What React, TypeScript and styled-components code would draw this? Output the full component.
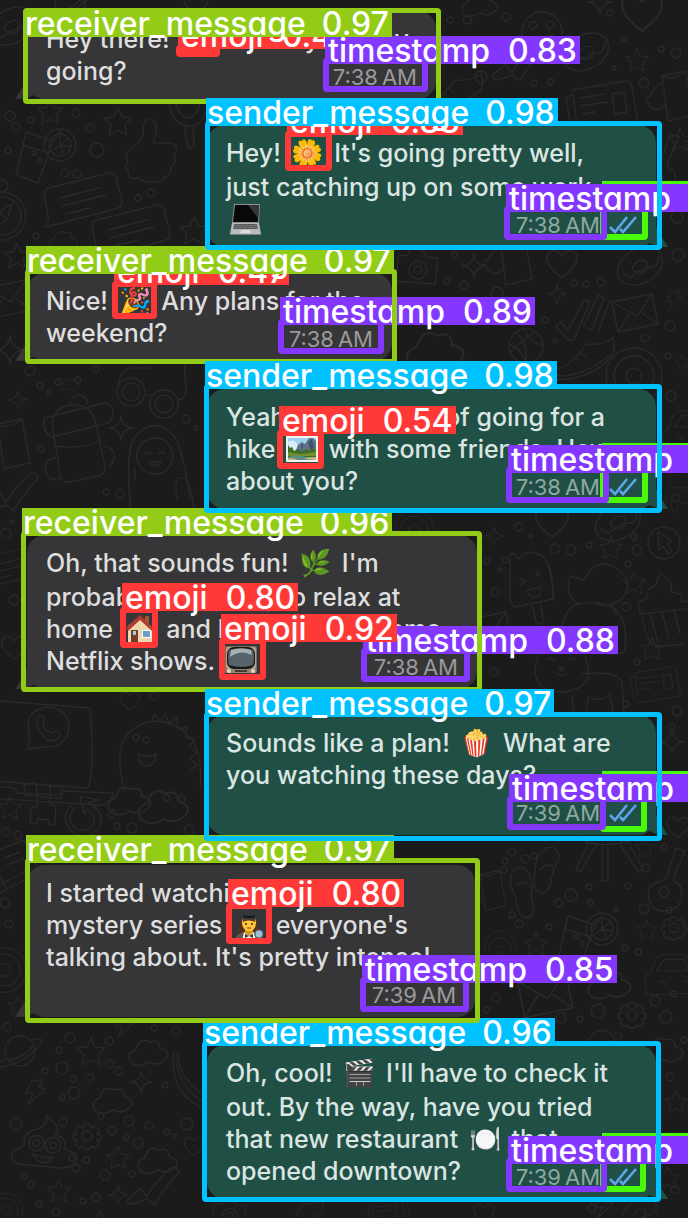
import React from "react";
import styled, { createGlobalStyle, css } from "styled-components";

type Side = "receiver" | "sender";
type Kind = "receiver_message" | "sender_message" | "emoji" | "timestamp" | "ticks";

const palette: Record<Kind, string> = {
  receiver_message: "#92cc17",
  sender_message: "#00c2ff",
  emoji: "#ff3838",
  timestamp: "#8438ff",
  ticks: "#48f90a",
};

const GlobalStyle = createGlobalStyle`
  * { box-sizing: border-box; }
  body { margin: 0; background: #1b1b1c; }
`;

const Page = styled.main`
  position: relative;
  overflow: hidden;
  padding: 11px 32px 19px 27px;
  background: #1b1b1c;
  font-family: Inter, "Liberation Sans", sans-serif;
`;

const Wallpaper = styled.svg`
  position: absolute;
  inset: 0;
  width: 100%;
  height: 100%;
  fill: none;
  stroke: #29292a;
  stroke-width: 1.4;
  stroke-linecap: round;
  stroke-linejoin: round;
`;

const Thread = styled.ol`
  display: flex;
  flex-direction: column;
  list-style: none;
  margin: 0;
  padding: 0;
`;

const Bubble = styled.li<{ $side: Side; $width: number; $space: number }>`
  position: relative;
  display: grid;
  width: ${(p) => p.$width}px;
  margin-bottom: ${(p) => p.$space}px;
  padding: 12px 19px;
  border-radius: 18px;
  align-self: ${(p) => (p.$side === "sender" ? "flex-end" : "flex-start")};
  background: ${(p) => (p.$side === "sender" ? "#205045" : "#363638")};
  color: ${(p) => (p.$side === "sender" ? "#dbe5e2" : "#dededf")};

  &::before {
    content: "";
    position: absolute;
    bottom: 0;
    width: 26px;
    height: 20px;
    background: inherit;
    ${(p) =>
      p.$side === "sender"
        ? css`
            right: -12px;
            clip-path: path("M0 0 H14 Q18 8 26 20 Q12 20 4 14 Z");
          `
        : css`
            left: -12px;
            clip-path: path("M26 0 H12 Q8 8 0 20 Q14 20 22 14 Z");
          `}
  }
`;

const Text = styled.p<{ $ownStampRow?: boolean }>`
  grid-area: 1 / 1;
  position: relative;
  margin: 0;
  padding-bottom: ${(p) => (p.$ownStampRow ? 32 : 0)}px;
  font-size: 25px;
  font-weight: 480;
  white-space: pre;
`;

const Line = styled.span<{ $tall?: boolean }>`
  display: flex;
  align-items: center;
  height: ${(p) => (p.$tall ? 34 : 32)}px;
  padding-bottom: ${(p) => (p.$tall ? 2 : 0)}px;
  line-height: 32px;
`;

const Emoji = styled.span`
  display: inline-flex;
  justify-content: center;
  width: 40px;
  font-size: 26px;
`;

const Picture = styled.svg`
  width: 32px;
  height: 32px;
  margin: 0 4px;
`;

const Meta = styled.div<{ $side: Side }>`
  grid-area: 1 / 1;
  align-self: end;
  justify-self: end;
  position: relative;
  display: flex;
  align-items: center;
  gap: 9px;
  color: ${(p) => (p.$side === "sender" ? "#8fa8a1" : "#9a9a9c")};
  font-size: 22px;
  line-height: 20px;
`;

const Ticks = styled.svg`
  width: 28px;
  height: 18px;
  fill: none;
  stroke: #5ba4ee;
  stroke-width: 2.6;
`;

const Box = styled.div<{ $kind: Kind; $x: number; $y: number; $w: number; $h: number; $level: number }>`
  position: absolute;
  left: ${(p) => p.$x}px;
  top: ${(p) => p.$y}px;
  width: ${(p) => p.$w}px;
  height: ${(p) => p.$h}px;
  z-index: ${(p) => p.$level};
  border: ${(p) => (p.$kind.endsWith("message") ? 5 : 6)}px solid ${(p) => palette[p.$kind]};
  border-radius: 4px;
  pointer-events: none;
`;

const Tag = styled.span<{ $kind: Kind; $inside?: boolean }>`
  position: absolute;
  left: -4px;
  ${(p) => (p.$inside ? "top: -4px" : `bottom: calc(100% + ${p.$kind === "emoji" ? 2 : 0}px)`)};
  display: flex;
  gap: ${(p) => (p.$kind.endsWith("message") ? 16 : 18)}px;
  height: 28px;
  min-width: ${(p) => (p.$kind === "ticks" ? 160 : 0)}px;
  padding: 0 3px 0 ${(p) => (p.$kind.endsWith("message") ? 1 : 3)}px;
  background: ${(p) => palette[p.$kind]};
  color: #fff;
  font-size: 32px;
  font-weight: 500;
  line-height: 30px;
  font-feature-settings: "cv11";
  white-space: nowrap;
`;

const OffscreenScore = styled.span`
  width: 72px;
`;

interface Detection {
  kind: Kind;
  score?: string;
  level: number;
  box: [number, number, number, number];
  inside?: boolean;
}

interface Message {
  side: Side;
  time: string;
  width: number;
  space: number;
  ownStampRow?: boolean;
  lines: { tall?: boolean; content: React.ReactNode }[];
  detections: Detection[];
}

const Laptop = () => (
  <Picture viewBox="0 0 32 32" role="img" aria-label="laptop">
    <path d="M4 1h26l-1 19H2z" fill="#8d8f90" />
    <path d="M5 2h24l-1 17H3z" fill="#080808" />
    <path d="M18 2h11l-1 13z" fill="#34373a" />
    <path d="M2 20h27l2 11H0z" fill="#b9babb" />
    <path d="M4 21h23l1 5H3z" fill="#56585a" />
    <path d="M4 22.500h23M3 24.500h25" stroke="#a6a8a9" strokeWidth=".6" strokeDasharray="1.500 1" />
    <path d="M11 27h9l1 3H10z" fill="#dcdddd" />
    <path d="M0 31h31v1H0z" fill="#7d7f80" />
  </Picture>
);

const Landscape = () => (
  <Picture viewBox="0 0 32 32" role="img" aria-label="national park">
    <path d="M0 3h32v26H0z" fill="#f1f3ee" />
    <path d="M2 5h28v22H2z" fill="#9fd0ef" />
    <path d="M2 9q6-4 9 2v9H2z" fill="#dcecf4" />
    <path d="M9 20l3-8 4-3 3 2 4-6h4l3 3v13z" fill="#5d7286" />
    <path d="M22 9l4-3 2 9-3 3zM15 11l2 1-1 6z" fill="#3d5268" />
    <path d="M2 12l2 3 2-1 2 4 4-2 4 3 4-3 3 2 3-3 4 2v7H2z" fill="#3f6d25" />
    <path d="M2 19l5 1 9 1 14-2v4H2z" fill="#74902c" />
    <path d="M2 24q8-3 14-1t14 1v3H2z" fill="#5a8d88" />
    <path d="M2 25q7 0 10 2H2zM30 24q-9 0-12 2l12 1z" fill="#c9b37d" />
  </Picture>
);

const Television = () => (
  <Picture viewBox="0 0 32 32" role="img" aria-label="television">
    <rect x="0" y="1" width="32" height="27" rx="2" fill="#806c58" />
    <rect x="1" y="2" width="30" height="22" rx="2" fill="#b5a28c" />
    <rect x="2" y="2" width="28" height="22" rx="7" fill="#15191a" />
    <path d="M4 5q12-4 24 0 2 8 0 15-12 4-24 0Q2 12 4 5" fill="#56646a" />
    <path d="M6 5q10-3 20 0l1 5Q16 4 5 12z" fill="#a3b0b4" />
    <path d="M1 24h30v4H1z" fill="#998672" />
    <path d="M10 26h12" stroke="#423a33" strokeWidth="2" />
    <circle cx="4" cy="26" r="2" fill="#e0d9cd" />
    <circle cx="28" cy="26" r="2" fill="#e0d9cd" />
    <path d="M4 28h4v3H5zM24 28h4l-1 3h-3z" fill="#5b4a3b" />
  </Picture>
);

const House = () => (
  <Picture viewBox="0 0 32 32" role="img" aria-label="house">
    <path d="M21 3h4v8h-4z" fill="#a2543d" />
    <path d="M4 13L16 3l12 11v16H4z" fill="#efd7ae" />
    <path d="M2 15L16 2l14 14-2 2L16 7 4 18z" fill="#b33a2c" />
    <path d="M7 17h7v13H7z" fill="#713c29" />
    <path d="M9 18h3v4H9z" fill="#a9c8d8" />
    <path d="M18 17h9v8h-9z" fill="#fff" />
    <path d="M19 18h7v6h-7z" fill="#699fc8" />
    <path d="M3 29h26v2H3z" fill="#8c9470" />
  </Picture>
);

const Detective = () => (
  <Picture viewBox="0 0 32 32" role="img" aria-label="detective">
    <path d="M9 9q-3 8-4 13l4 2h14l4-3q-3-5-4-12z" fill="#563220" />
    <path d="M2 32q1-8 9-9h10q8 1 9 9z" fill="#6b5646" />
    <path d="M11 23l5 3 5-3 2 9H9z" fill="#f1f1ef" />
    <path d="M12 19h8v5l-4 3-4-3z" fill="#d99a1c" />
    <path d="M9 9h14q1 13-7 13T9 9z" fill="#ffc83a" />
    <path d="M9 9h14l-1 4q-7-3-12 0z" fill="#6b3d22" />
    <circle cx="13" cy="15" r="1" fill="#3b2412" />
    <circle cx="19" cy="15" r="1" fill="#3b2412" />
    <path d="M14 19h4" stroke="#b4442e" strokeWidth="1.200" />
    <path d="M4 9q4-2 6-3 0-5 6-5t6 5q2 1 6 3-12 3-24 0z" fill="#35393b" />
    <path d="M10 6q6 2 12 0v2q-6 2-12 0z" fill="#161819" />
    <path d="M12 25l4 2 4-2v4l-4-2-4 2z" fill="#34383b" />
    <circle cx="26" cy="25" r="4" fill="#9dbfd5" stroke="#5a5f63" strokeWidth="1.200" />
    <path d="M24 29l-2 3" stroke="#4a4d50" strokeWidth="2" />
  </Picture>
);

const E = ({ children }: { children: string }) => <Emoji>{children}</Emoji>;

const messages: Message[] = [
  {
    side: "receiver",
    time: "7:38\u2009AM",
    width: 409,
    space: 26,
    lines: [
      { content: <>Hey there! <E>👋</E> How's your day</> },
      { content: "going?" },
    ],
    detections: [
      { kind: "receiver_message", score: "0.97", level: 97, box: [-4, -3, 418, 96], inside: true },
      { kind: "emoji", score: "0.47", level: 47, box: [149, 34, 44, 11] },
      { kind: "timestamp", score: "0.83", level: 83, box: [296, 47, 105, 34] },
    ],
  },
  {
    side: "sender",
    time: "7:38\u2009AM",
    width: 449,
    space: 26,
    lines: [
      { tall: true, content: <>Hey! <E>🌼</E> It's going pretty well,</> },
      { content: "just catching up on some work" },
      { content: <Laptop /> },
    ],
    detections: [
      { kind: "sender_message", score: "0.98", level: 98, box: [-2, -4, 457, 129] },
      { kind: "emoji", score: "0.88", level: 88, box: [78, 6, 47, 40] },
      { kind: "timestamp", level: 87, box: [297, 81, 103, 34] },
      { kind: "ticks", level: 60, box: [393, 78, 48, 37] },
    ],
  },
  {
    side: "receiver",
    time: "7:38\u2009AM",
    width: 365,
    space: 28,
    lines: [
      { content: <>Nice! <E>🎉</E> Any plans for the</> },
      { content: "weekend?" },
    ],
    detections: [
      { kind: "receiver_message", score: "0.97", level: 97, box: [-2, -4, 372, 95] },
      { kind: "emoji", score: "0.47", level: 47, box: [85, 8, 45, 38] },
      { kind: "timestamp", score: "0.89", level: 89, box: [251, 46, 106, 35] },
    ],
  },
  {
    side: "sender",
    time: "7:38\u2009AM",
    width: 449,
    space: 26,
    lines: [
      { content: "Yeah, I'm thinking of going for a" },
      { content: <>hike <Landscape /> with some friends. How</> },
      { content: "about you?" },
    ],
    detections: [
      { kind: "sender_message", score: "0.98", level: 98, box: [-3, -5, 458, 129] },
      { kind: "emoji", score: "0.54", level: 54, box: [70, 41, 47, 39] },
      { kind: "timestamp", level: 87, box: [299, 78, 103, 36] },
      { kind: "ticks", level: 60, box: [393, 76, 48, 38] },
    ],
  },
  {
    side: "receiver",
    time: "7:38\u2009AM",
    width: 450,
    space: 26,
    lines: [
      { tall: true, content: <>Oh, that sounds fun! <E>🌿</E> I'm</> },
      { content: "probably just going to relax at" },
      { content: <>home <House /> and binge-watch some</> },
      { content: <>Netflix shows. <Television /></> },
    ],
    detections: [
      { kind: "receiver_message", score: "0.96", level: 96, box: [-6, -4, 461, 161] },
      { kind: "emoji", score: "0.80", level: 80, box: [93, 72, 38, 41] },
      { kind: "emoji", score: "0.92", level: 92, box: [192, 103, 47, 42] },
      { kind: "timestamp", score: "0.88", level: 88, box: [334, 113, 109, 34] },
    ],
  },
  {
    side: "sender",
    time: "7:39\u2009AM",
    width: 449,
    space: 30,
    ownStampRow: true,
    lines: [
      { content: <>Sounds like a plan! <E>🍿</E> What are</> },
      { content: "you watching these days?" },
    ],
    detections: [
      { kind: "sender_message", score: "0.97", level: 98, box: [-3, -3, 458, 129] },
      { kind: "timestamp", level: 87, box: [300, 81, 99, 34] },
      { kind: "ticks", level: 60, box: [393, 78, 47, 39] },
    ],
  },
  {
    side: "receiver",
    time: "7:39\u2009AM",
    width: 448,
    space: 28,
    ownStampRow: true,
    lines: [
      { content: "I started watching a new" },
      { content: <>mystery series <Detective /> everyone's</> },
      { content: "talking about. It's pretty intense!" },
    ],
    detections: [
      { kind: "receiver_message", score: "0.97", level: 97, box: [-2, -7, 455, 165] },
      { kind: "emoji", score: "0.80", level: 80, box: [199, 38, 46, 41] },
      { kind: "timestamp", score: "0.85", level: 85, box: [333, 112, 109, 35] },
    ],
  },
  {
    side: "sender",
    time: "7:39\u2009AM",
    width: 449,
    space: 0,
    lines: [
      { tall: true, content: <>Oh, cool! <E>🎬</E> I'll have to check it</> },
      { content: "out. By the way, have you tried" },
      { content: <>that new restaurant <E>🍽️</E> that</> },
      { content: "opened downtown?" },
    ],
    detections: [
      { kind: "sender_message", score: "0.96", level: 96, box: [-5, -4, 459, 161] },
      { kind: "timestamp", level: 87, box: [299, 113, 101, 34] },
      { kind: "ticks", level: 60, box: [393, 110, 46, 37] },
    ],
  },
];

/* Line drawings of the chat wallpaper, each drawn round its own origin. */
const doodles: Record<string, React.ReactNode> = {
  star: <path d="M0-14l4 9 10 1-7 7 2 10-9-5-9 5 2-10-7-7 10-1z" />,
  sparkle: <path d="M0-12Q1-1 12 0 1 1 0 12-1 1-12 0-1-1 0-12z" />,
  cloud: <path d="M-16 10q-6-8 4-12 3-12 13-7 9-3 9 6 10 2 6 9-8 8-16 3-8 6-16 1z" />,
  bolt: <path d="M-4-14l13-2-5 9 8 1-20 18 6-13-8 0z" />,
  heart: <path d="M0 13Q-15 2-12-6-6-14 0-5 6-14 12-6 15 2 0 13z" />,
  gear: <><circle r="5" /><path d="M-3-12h6l1 4 4-2 4 4-2 4 4 1v4l-4 1 2 4-4 4-4-2-1 3h-6l-1-3-4 2-4-4 2-4-4-1v-4l4-1-2-4 4-4 4 2z" /></>,
  planet: <><circle r="15" /><path d="M-14 7q-14 10-6 9Q2 14 20-6q6-9-7-5M-10 9Q5 6 14-6" /></>,
  drink: <><path d="M-12-16l27 9-15 42-22-8zM-15-3l26 8M15-7l8-10" /><circle cx="22" cy="-3" r="16" /><circle cx="22" cy="-3" r="11" /><path d="M22-3l8-7M22-3l10 2M22-3l4 9M22-3v-10M22-3l-8 6" /><circle cx="-4" cy="5" r="2" /><circle cx="2" cy="12" r="2" /></>,
  thumb: <path d="M-18 0q7-4 13-15 0-20 9-16 8 5 1 24h18q9 4 3 12 4 7-3 11 1 8-6 11-4 7-16 5-8-1-11-4-12 2-9-6-6-6-1-10-4-8 2-12z" />,
  note: <><path d="M-34-8q0-5 5-6l60-15q6-1 7 4l6 24q1 6-4 7L-20 22l-13 3 4-7zM-18-4l42-11M-16 4L28-7M-12 12l24-6" /></>,
  compass: <><circle r="24" /><circle r="19" /><circle cy="-30" r="6" /><path d="M-8 12L-3-4 10-12 5 4zM-3-4l8 8" /></>,
  glasses: <><circle cx="-17" cy="0" r="14" /><circle cx="-17" r="9" /><circle cx="16" cy="12" r="14" /><circle cx="16" cy="12" r="9" /><path d="M-3 4q5-3 7 2M-30-6q2-16 14-18h18M30 8q8-2 8-8l-2-33" /></>,
  backpack: <><path d="M-20 28l-8-50q2-18 20-19t23 15l10 46q1 8-6 10l-30 6q-8 0-9-8zM-26 0q28 4 47-6M-36-28l60-15q8 0 9 8t-5 12l-56 14q-10-5-8-19zM-25 12q-12 2-9 14l4 8 10-2M24 0q12 2 10 14l-4 6" /><path d="M-10-42q2-10 12-8 6 2 5 8" /></>,
  bean: <><path d="M-24 44q-6-60 3-74Q0-56 22-28q10 30 13 60M-20 12v-12M22 30q-4-20 5-20 8 0 12 30" /><circle r="18" cy="-12" /><path d="M-10-14q4-4 7 0M3-14q4-4 7 0M-6-6q6 8 12 0z" /></>,
  camera: <><path d="M-20-12l10-1 3-6 12 1 3 7 12 1-3 26-39-3z" /><circle cx="0" cy="2" r="9" /><circle cx="0" cy="2" r="4" /></>,
  letter: <><path d="M-22-12l40-8 6 30-40 8zM-22-12l25 14 15-22M-16 18l11-19M24 10L8-1" /></>,
  ball: <><circle r="17" /><path d="M-17-2q14 6 17 19M-10-14Q2-2 0 17M-1-17q2 12 18 16M9-14Q-6-4-16 6" /></>,
  eye: <><circle r="28" /><circle r="20" /><circle r="8" /></>,
  shoe: <path d="M-30 14Q-8 6 4-14q16 2 27-6 4 10-2 18-16 22-52 24-10-2-7-8zM-26 18q30 0 52-20M-6 0l5 3M-1-5l5 3" />,
  ticks: <path d="M-28 8l5-4 7 8L0-18l6 2-16 38-6 0zM2 10l6 2L20-20l-6-3L0 8M14 14L26-18" />,
  pen: <path d="M-26 8q-4 6 4 6l14-5 8 6Q2 8 24-18q-2-7-9-4Q-4-3-8 7l-6-9z" />,
  face: <><circle r="20" /><path d="M-12-5q-2-5 2-5 4-2 5 4l-5 4zM4-8q2-5 5-2 5 0 3 5l-6 2zM-9 5q10 6 20-3-2 14-11 13-7-2-9-10z" /></>,
  donut: <><ellipse rx="24" ry="17" transform="rotate(-30)" /><ellipse rx="8" ry="5" transform="rotate(-30)" /><path d="M-17 7q8 8 13-1 7 5 12-5 11 2 11-11" /></>,
  news: <><path d="M-28-16l54-9q5 0 6 6l6 36-60 10q-8-2-8-10l-4-26 7-2 4 30M-20-8l26-4M-19 0l26-4M-17 8l12-2M12-12l12-2 3 20-12 2z" /></>,
  jug: <path d="M-12-22l24-5 8 44-26 6zM-12-15q-10 6-12 14-6-3-2 6 6 12 18 2M-12-22q10 6 24-5" />,
  popsicle: <><path d="M-22-28q6-2 8 5 8-10 20-5 16 6 15 45l-38 8q-6-2-5-10zM0 22l4 18q5 4 8-1L8 20M6-28q12 0 16 46" /><path d="M-12-3l6 2-5 4M2-6l6-1-4-4M-5 8l13-3q3 10-5 10-6 1-8-7z" /></>,
  cupcake: <><path d="M-24 4q-6-8 8-12-4-8 8-13L-4-33Q12-22 6-14q14 0 12 10 16-3 12 6L-24 8zM-22 8q4 30 14 33L18 38M-14 8l8 28M-2 6l7 26M10 4l6 24" /></>,
  unicorn: <path d="M-28 38q0-30 16-34-14-10-8-28l14 4q12-24 32-12 18 12 8 28-12 14-30 7M-12 4q18-4 36 4 16 14 10 44l-12 2-2-22q-12 6-22 0l-4 20-10-2-2-22" />,
  kitty: <><path d="M-24-8L-20-28l12 9q10-3 18 0L22-26l2 22q8 20-8 28-18 8-34 0-14-10-6-32zM20 10q34-4 40 8l2 34-10 1-4-22q-12 8-22 2l-2 20-12 2-2-24" /><path d="M-14-4q3-4 7 0M6-4q3-4 7 0M-3 4h5l-3 3zM-6 9q5 5 10 0" /></>,
  pointer: <><circle r="16" /><path d="M-6-11l14 9-5 2 5 8-4 3-5-8-4 4z" /></>,
  phone: <><path d="M-20 21l2-12Q-26-18 0-21q21 2 21 21-2 20-24 19z" /><path d="M-10-11q6-3 6 3l-1 5q3 7 9 8 6-5 8 2-3 9-14 4Q-14-1-10-11z" /></>,
  dino: <><path d="M-34 46Q-44 2-30-10q20-22 52-6 24 16 20 60M-20 10q12 5 18 0 0 12-11 12-7-2-7-12M-6-22l2-8 6 7 5-8 4 10 8-5 1 11 9-2-2 10 9 2-5 8 8 5-7 7 7 6-7 6" /><circle cx="-22" cy="-6" r="3" /><circle cx="-12" cy="-4" r="3" /></>,
  laptop: <><path d="M-70-40L60-30q5 60-2 80L-76 40M-70-40v76M-76 44l60 6 4 5 40 2 5-4 50 2q-4 14-16 12L-76 58z" /></>,
  creeper: <path d="M-20-22l12-1 1 12-12 1zM6-20h12v12H6zM-7-10L6-8v6l6 2-1 18-6 1v-5l-11-1-1 5-7-1 1-15 6-1z" />,
  redo: <path d="M4-15q17 8 12 23-10 16-26 7-15-12-4-27l4 3q-8 10 1 19 9 6 17-2 6-10-5-17l-3 5-4-18 18 4z" />,
  poop: <><path d="M-22 20q-14-8 6-17-2-10 8-14 14-2 12-13 14 10 8 17 12 4 8 13 16 5 10 14-8 5-20 3z" /><circle cx="-5" cy="1" r="7" /><circle cx="10" cy="3" r="7" /><circle cx="-5" cy="1" r="3" /><circle cx="10" cy="3" r="3" /><path d="M-9 11q10 4 19 3-9 11-19-3z" /></>,
  sandals: <><path d="M-18-22q10-6 15 4t2 22q6 20-4 22-9 0-11-20-10-18-2-28zM-15-6q8-8 14 2M14-44q12-4 13 10-4 8-8 20 0 14-10 15-10-3-6-20 0-18 11-25zM7-22q10-8 14-3" /></>,
  guitar: <><path d="M-18 20q-6-16 9-20 8-2 9-9L8-34l9 3L6-6q-2 6 6 9 6 24-14 26-14 0-16-9z" /><circle cx="-4" cy="10" r="5" /></>,
  car: <path d="M-22 20q-6-18 6-22 4-22 16-22h26q12 10 10 24 8 10 4 24l-62 2zM-10-4h40l-4-14H0zM-6 10q6-4 8 4M26 10q6-4 8 4" />,
  mic: <path d="M-13-22q13-12 26 0 0 28-13 30-13-2-13-30zM-20-20Q-20 14 0 16t20-34M-4 16l4 22 6-1-1-21M-12-14h24M-12-7h24" />,
  camp: <path d="M-34-14h68q-4 14-14 18-20 5-40 0-12-6-14-18zM-18 6l-12 26 5 1L-10 7M-4 7v36h6V7M14 6l18 28 5-3L22 4" />,
  banana: <path d="M-20-38l5-1q-2 26 36 50l-3 8Q-22 8-20-38zM-17-30Q-12 0 18 14" />,
  book: <path d="M-26 18q-4-26 4-34l36-14 16 32-42 22zM-18-12l14 30M-12 16l34-18M-6-12l16-6M-3-5l16-6" />,
};

const placed: [string, number, number, number?][] = [
  ["donut", 12, 26], ["planet", 70, 2], ["star", 50, 112, 0.9], ["star", 118, 122], ["thumb", 148, 150],
  ["drink", 38, 148], ["mic", 188, 110], ["note", 78, 202], ["note", 126, 234], ["compass", 2, 216], ["star", 194, 231],
  ["cloud", 64, 240, 0.8], ["star", 17, 256, 0.9], ["letter", 8, 300], ["sparkle", 10, 350, 1.2], ["sparkle", 18, 400, 0.8],
  ["glasses", 148, 392], ["backpack", 80, 446], ["sparkle", 121, 428], ["bean", 155, 468], ["jug", 10, 446], ["pen", 14, 496],
  ["note", 4, 570, 0.8], ["heart", 14, 646], ["phone", 48, 728], ["laptop", 30, 738], ["dino", 158, 744],
  ["star", 10, 808, 0.8], ["creeper", 44, 806], ["redo", 84, 818], ["cloud", 130, 800, 1.2], ["cloud", 164, 806, 1.4],
  ["book", 10, 870], ["eye", 4, 970, 0.8], ["star", 18, 1006, 0.7], ["planet", 20, 1051], ["star", 91, 1052], ["cloud", 149, 1052, 1.1],
  ["bolt", 124, 1028, 0.8], ["bolt", 35, 1094, 0.9], ["sparkle", 141, 1082, 0.9], ["banana", 193, 1092], ["cloud", 113, 1100, 1.1],
  ["poop", 42, 1142, 1.1], ["gear", 87, 1136], ["star", 118, 1158, 0.8], ["cloud", 158, 1160, 1.1], ["heart", 194, 1145, 0.8],
  ["star", 59, 1191, 0.8], ["sparkle", 118, 1195, 0.8], ["pen", 155, 1190], ["eye", 6, 1210, 0.6], ["star", 100, 1222, 0.8],
  ["face", 542, 32], ["donut", 586, 52], ["cloud", 480, 4], ["heart", 642, 10, 1.6], ["sparkle", 600, 2], ["star", 637, 60, 0.8],
  ["pen", 520, 66], ["news", 600, 106], ["jug", 674, 98], ["guitar", 662, 168], ["shoe", 450, 94], ["star", 680, 140, 0.8],
  ["camera", 418, 268], ["sparkle", 474, 266], ["jug", 512, 262], ["heart", 562, 262, 1.2], ["donut", 640, 266], ["sparkle", 557, 294, 0.8],
  ["ticks", 584, 318], ["letter", 634, 314], ["bolt", 674, 302, 0.7], ["ball", 526, 346], ["shoe", 582, 358],
  ["eye", 634, 376], ["cloud", 436, 350, 1.6], ["star", 682, 362, 0.5], ["car", 682, 430, 0.8], ["unicorn", 680, 486, 0.5],
  ["eye", 414, 530, 0.7], ["sparkle", 494, 536, 0.8], ["heart", 552, 520, 1.3], ["donut", 618, 522], ["pointer", 664, 543],
  ["star", 611, 548, 0.8], ["popsicle", 532, 582], ["unicorn", 590, 600], ["star", 634, 583, 0.8], ["cupcake", 664, 606],
  ["kitty", 562, 664], ["star", 652, 649, 0.8], ["news", 654, 684, 0.7], ["letter", 488, 632], ["sparkle", 672, 742],
  ["camp", 606, 838], ["star", 645, 848, 0.7], ["heart", 678, 826, 0.9], ["sandals", 532, 892], ["guitar", 668, 882],
  ["drink", 580, 932], ["star", 536, 944, 0.8], ["star", 647, 930, 0.7], ["gear", 674, 928, 0.9], ["car", 664, 974, 0.8],
  ["jug", 490, 892, 0.8], ["bean", 500, 956, 0.6], ["letter", 544, 996, 1.2], ["cloud", 610, 984, 1.2], ["gear", 632, 1015],
  ["planet", 602, 1044, 0.9], ["cloud", 664, 1050, 1.1], ["star", 676, 1102, 0.8], ["star", 668, 1178, 0.8], ["news", 388, 1212, 0.6],
  ["bolt", 604, 1208, 0.8], ["donut", 640, 1214, 0.8], ["heart", 484, 1212, 0.8], ["camera", 230, 1214, 0.8], ["shoe", 300, 1214, 0.7],
  ["heart", 196, 2], ["cloud", 70, 384, 0.5], ["heart", 130, 700, 0.8],
];

const bubbles: [number, number, number][] = [
  [10, 116, 5], [16, 127, 4], [31, 120, 3], [76, 113, 4], [90, 128, 4], [65, 173, 4], [77, 174, 4], [138, 198, 3], [151, 193, 4],
  [97, 150, 7], [8, 150, 3], [36, 236, 3], [30, 371, 5], [40, 386, 3], [58, 382, 3], [78, 380, 3], [49, 392, 2], [96, 369, 3],
  [41, 449, 3], [106, 492, 3], [120, 494, 4], [186, 419, 4], [196, 428, 2], [14, 600, 5], [6, 533, 5], [12, 522, 2], [154, 696, 4],
  [112, 814, 4], [132, 828, 5], [117, 826, 3], [167, 798, 3], [182, 799, 3], [6, 832, 4], [18, 835, 4], [189, 830, 5], [5, 903, 5],
  [9, 924, 4], [7, 1027, 4], [70, 1038, 5], [109, 1041, 4], [59, 1050, 3], [62, 1068, 6], [45, 1071, 3], [110, 1064, 4], [119, 1071, 4],
  [73, 1079, 3], [90, 1078, 4], [74, 1093, 6], [62, 1097, 3], [165, 1085, 3], [154, 1028, 3], [176, 1031, 4], [16, 1124, 6], [63, 1122, 4],
  [101, 1116, 3], [129, 1121, 5], [112, 1131, 4], [126, 1137, 3], [149, 1126, 4], [167, 1132, 3], [174, 1136, 2], [187, 1124, 6],
  [138, 1143, 5], [72, 1158, 3], [76, 1168, 4], [86, 1160, 3], [105, 1175, 5], [132, 1174, 3], [24, 1176, 3], [31, 1185, 3],
  [83, 1201, 3], [96, 1197, 4], [56, 1212, 4], [39, 1204, 3], [450, 20, 3], [467, 20, 4], [506, 17, 4], [485, 41, 4], [610, 13, 3],
  [624, 39, 2], [661, 49, 3], [676, 53, 5], [481, 77, 6], [534, 83, 3], [551, 82, 3], [614, 68, 2], [644, 83, 5], [677, 217, 6],
  [447, 281, 3], [464, 285, 4], [454, 255, 3], [574, 283, 3], [586, 284, 3], [601, 282, 4], [497, 293, 6], [545, 320, 3], [670, 326, 5],
  [645, 338, 4], [555, 341, 2], [668, 356, 3], [671, 396, 5], [678, 255, 6], [555, 549, 5], [571, 550, 5], [589, 545, 3], [634, 537, 3],
  [637, 550, 5], [519, 527, 4], [531, 536, 2], [505, 560, 3], [487, 561, 3], [500, 570, 2], [495, 592, 4], [628, 564, 3], [626, 607, 4],
  [616, 612, 2], [637, 662, 3], [494, 672, 4], [626, 704, 3], [677, 711, 5], [672, 727, 3], [676, 498, 4], [512, 852, 4], [525, 859, 4],
  [534, 856, 3], [505, 861, 3], [504, 870, 3], [571, 895, 6], [559, 903, 4], [589, 887, 3], [590, 903, 3], [628, 886, 3], [646, 868, 4],
  [644, 909, 5], [549, 927, 3], [519, 924, 4], [512, 915, 3], [616, 909, 2], [625, 948, 3], [638, 952, 3], [664, 847, 3], [669, 910, 3],
  [598, 1011, 7], [561, 1018, 5], [580, 1019, 3], [655, 1001, 5], [666, 1017, 6], [674, 994, 3], [496, 998, 4], [487, 1010, 3],
  [675, 1190, 4], [592, 1208, 4], [684, 1040, 3], [670, 1077, 4],
];

const Doodles = () => (
  <Wallpaper viewBox="0 0 688 1218" preserveAspectRatio="xMidYMin slice" aria-hidden="true">
    {placed.map(([name, x, y, scale = 1], i) => (
      <g key={i} transform={`translate(${x} ${y}) scale(${scale})`}>
        {doodles[name]}
      </g>
    ))}
    {bubbles.map(([x, y, r], i) => (
      <circle key={i} cx={x} cy={y} r={r} />
    ))}
  </Wallpaper>
);

function Annotation({ detection }: { detection: Detection }) {
  const { kind, score, level, box, inside } = detection;
  const [x, y, w, h] = box;
  return (
    <Box $kind={kind} $x={x} $y={y} $w={w} $h={h} $level={level}>
      <Tag $kind={kind} $inside={inside}>
        {kind !== "ticks" && <span>{kind}</span>}
        {score && <span>{score}</span>}
        {kind === "timestamp" && !score && <OffscreenScore />}
      </Tag>
    </Box>
  );
}

function ChatMessage({ message }: { message: Message }) {
  const { side, time, width, space, ownStampRow, lines, detections } = message;
  return (
    <Bubble $side={side} $width={width} $space={space}>
      <Text $ownStampRow={ownStampRow}>
        {lines.map((line, i) => (
          <Line key={i} $tall={line.tall}>
            {line.content}
          </Line>
        ))}
      </Text>
      <Meta $side={side}>
        <time>{time}</time>
        {side === "sender" && (
          <Ticks viewBox="0 0 28 18" role="img" aria-label="Read">
            <path d="M1 11l5 5L18 1M11 13l3 3L27 1" />
          </Ticks>
        )}
      </Meta>
      {detections.map((d, i) => (
        <Annotation key={i} detection={d} />
      ))}
    </Bubble>
  );
}

export default function App() {
  return (
    <Page>
      <GlobalStyle />
      <Doodles />
      <Thread>
        {messages.map((m, i) => (
          <ChatMessage key={i} message={m} />
        ))}
      </Thread>
    </Page>
  );
}
